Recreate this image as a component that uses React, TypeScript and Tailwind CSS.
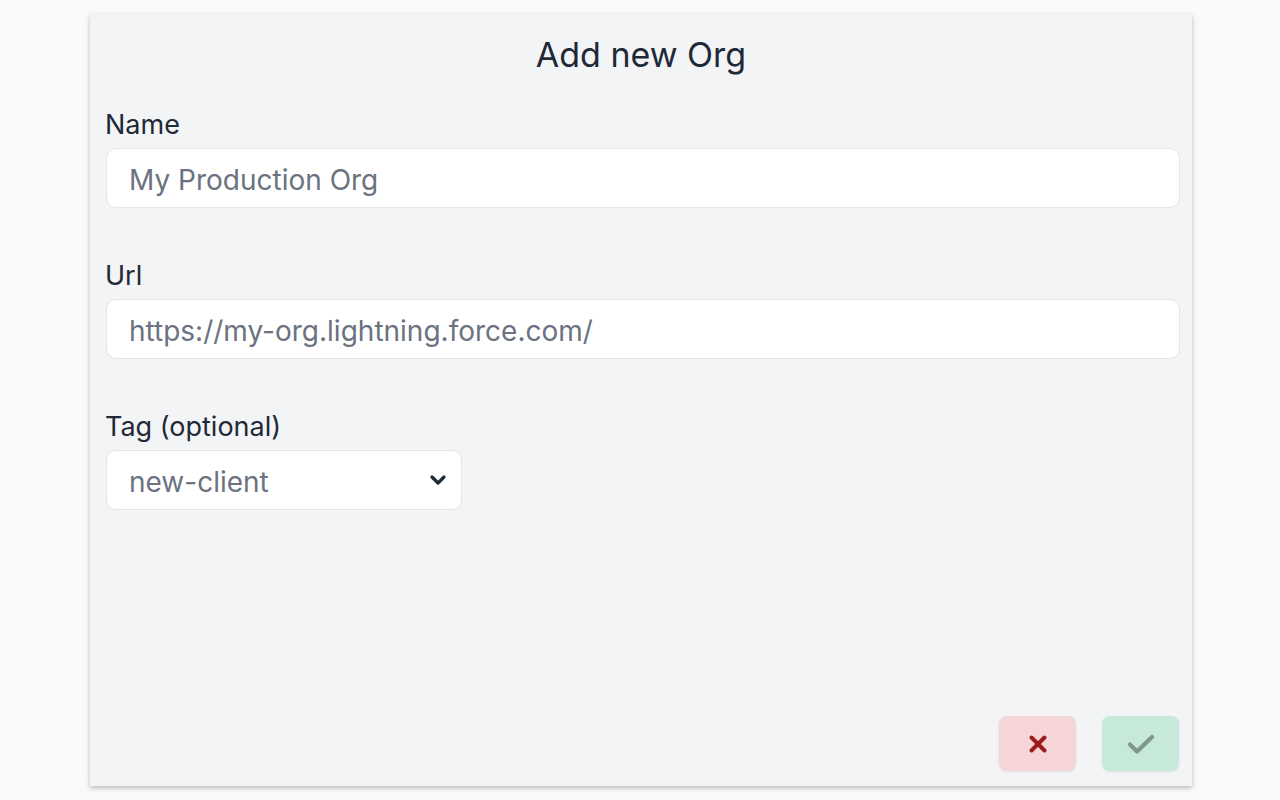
export default function App() {
  const font = { fontFamily: "Inter, 'Noto Sans', sans-serif" };
  return (
    <div className="min-h-screen w-full bg-[#fafafa] pt-[14px]" style={font}>
      <div className="mx-[90px] flex h-[772px] w-[1102px] flex-col bg-[#f3f4f6] px-4 shadow-[0_2px_5px_rgba(0,0,0,0.25)]">
        <h1 className="mt-[21px] text-center text-[34px] leading-[40px] text-[#1f2937]">Add new Org</h1>

        <label className="mt-[34px] block -ml-px text-[27px] leading-[32px] text-[#1f2937]">Name</label>
        <div className="mt-[7px] flex h-[60px] w-[1074px] items-center rounded-[10px] border border-[#e3e5ea] bg-white px-[22px] pt-[3px] text-[28px] text-[#6b7280]">
          My Production Org
        </div>

        <label className="mt-[52px] block -ml-px text-[27px] leading-[32px] text-[#1f2937]">Url</label>
        <div className="mt-[7px] flex h-[60px] w-[1074px] items-center rounded-[10px] border border-[#e3e5ea] bg-white px-[22px] pt-[3px] text-[28px] text-[#6b7280]">
          https://my-org.lightning.force.com/
        </div>

        <label className="mt-[52px] block -ml-px text-[27px] leading-[32px] text-[#1f2937]">Tag (optional)</label>
        <div className="mt-[7px] flex h-[60px] w-[356px] items-center justify-between rounded-[10px] border border-[#e3e5ea] bg-white pl-[22px] pr-[14px] text-[28px] text-[#6b7280]">
          <span className="pt-[3px]">new-client</span>
          <svg width="18" height="12" viewBox="0 0 18 12" fill="none">
            <path d="M3 3l6 6 6-6" stroke="#1f2937" strokeWidth="3.2" strokeLinecap="round" strokeLinejoin="round" />
          </svg>
        </div>

        <div className="mt-auto mb-[15px] mr-[-3px] flex justify-end gap-[26px]">
          <button className="flex h-[55px] w-[77px] items-center justify-center rounded-[8px] bg-[#f5d5d7] shadow-[0_1px_3px_rgba(0,0,0,0.08)]">
            <svg width="20" height="20" viewBox="0 0 20 20" fill="none">
              <path d="M3.5 3.5l13 13M16.5 3.5l-13 13" stroke="#9b1c1c" strokeWidth="4" strokeLinecap="round" />
            </svg>
          </button>
          <button className="flex h-[55px] w-[77px] items-center justify-center rounded-[8px] bg-[#c7e9d9] shadow-[0_1px_3px_rgba(0,0,0,0.08)]">
            <svg width="28" height="22" viewBox="0 0 28 22" fill="none">
              <path d="M3 11.5l7 7L25 4" stroke="#7f978f" strokeWidth="4.2" strokeLinecap="round" strokeLinejoin="round" />
            </svg>
          </button>
        </div>
      </div>
    </div>
  );
}
